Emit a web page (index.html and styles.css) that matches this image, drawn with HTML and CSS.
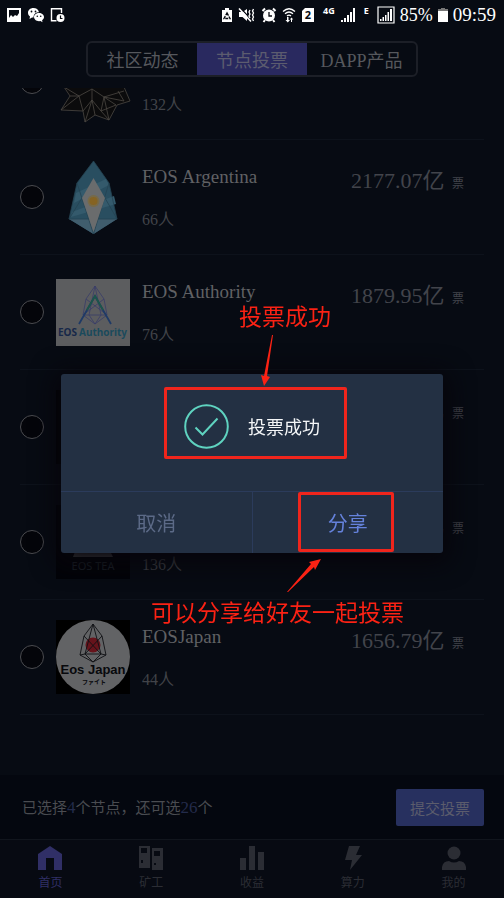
FILE: index.html
```html
<!DOCTYPE html>
<html lang="zh-CN">
<head>
    <meta charset="UTF-8">
    <meta name="viewport" content="width=device-width, initial-scale=1.0">
    <title>节点投票</title>
    <link rel="stylesheet" href="styles.css">
</head>
<body>
    <header class="status-bar">
        <div class="status-left">
            <svg width="16" height="16" viewBox="0 0 16 16"><path fill="#fff" fill-rule="evenodd" d="M1 1h14v14H1zM3 3v8l2-3 2 2 2-2 2 1 2-3V3z"/></svg>
            <svg width="18" height="16" viewBox="0 0 18 16"><path fill="#fff" d="M6.500 1C3 1 1 3.300 1 5.800c0 1.600.8 2.900 2 3.700L2.500 12 5 10.500h1.500C6.500 7 9 5.200 12 5.200 11.500 2.600 9.200 1 6.500 1z"/><path fill="#fff" d="M12 6c-2.800 0-5 1.800-5 4.100s2.200 4.100 5 4.100l1.500-.2 2 1.200-.4-1.900c1.200-.8 1.900-1.900 1.900-3.200C17 7.800 14.800 6 12 6z"/><g fill="#080b12"><circle cx="4.500" cy="4.500" r=".9"/><circle cx="8.500" cy="4.500" r=".9"/><circle cx="10.300" cy="9.300" r=".8"/><circle cx="13.700" cy="9.300" r=".8"/></g></svg>
            <svg width="16" height="16" viewBox="0 0 16 16"><path fill="none" stroke="#fff" stroke-width="1.400" d="M11.500 6V1.700H1.500v12h5"/><circle cx="10.500" cy="11" r="4" fill="#fff"/><path fill="none" stroke="#080b12" stroke-width="1.200" d="M10.500 8.500v3h2"/></svg>
        </div>
        <div class="status-right">
            <svg width="12" height="16" viewBox="0 0 12 16"><path fill="#fff" d="M4 1h4v2h3v12H1V3h3z"/><path fill="none" stroke="#080b12" stroke-width="1.400" stroke-dasharray="3 1" d="M6 6l3 5.500H3z"/></svg>
            <svg width="18" height="16" viewBox="0 0 18 16"><path fill="#fff" d="M1 5h3.500L9 2v12l-4.500-4H1z"/><path stroke="#080b12" stroke-width="1.200" d="M2.500 1l11 12"/><path stroke="#fff" stroke-width="1.600" d="M1 1.500l12 13"/><path fill="none" stroke="#fff" stroke-width="1.300" d="M12 3l-1 2 1 2-1 2 1 2M15.500 2l-1 2 1 2-1 2 1 2-1 2 1 2"/></svg>
            <svg width="16" height="16" viewBox="0 0 16 16"><circle cx="8" cy="8.500" r="6" fill="#fff"/><path fill="none" stroke="#fff" stroke-width="2" d="M1.500 4L4 1.500M14.500 4L12 1.500M4 13l-1.500 2M12 13l1.500 2"/><path fill="none" stroke="#080b12" stroke-width="1.300" d="M8 5v4h3"/></svg>
            <svg class="icon-wifi" width="14" height="16" viewBox="0 0 14 16"><path fill="none" stroke="#fff" stroke-width="1.300" d="M1 4.500q6-5.500 12 0M3 6.800q4-3.600 8 0M5 9q2-1.800 4 0"/><path fill="#fff" d="M5 10h1.500v3H8l-2.200 2.500L3.500 13H5zM9 15V12.500H7.800L9.500 10.500l1.700 2H10V15z"/></svg>
            <svg width="14" height="16" viewBox="0 0 14 16"><path fill="#fff" d="M4 1h9v14H1V4z"/><text x="7" y="12" text-anchor="middle" class="sim-number">2</text></svg>
            <span class="net">4G</span>
            <svg class="icon-signal" width="16" height="16" viewBox="0 0 16 16"><path fill="#fff" d="M1 13h2v2H1zM4 11h2v4H4zM7 8h2v7H7zM10 5h2v10h-2zM13 1h2v14h-2z"/></svg>
            <span class="net net-edge">E</span>
            <svg width="18" height="18" viewBox="0 0 18 18"><path fill="none" stroke="#fff" stroke-width="1.200" d="M1 1h16v16H1z"/><path fill="#fff" d="M3 13h1.500v2H3zM5.500 11H7v4H5.500zM8 9h1.500v6H8zM10.500 6H12v9h-1.500zM13 3h2v12h-2z"/></svg>
            <span class="battery-level">85%</span>
            <svg width="10" height="16" viewBox="0 0 10 16"><path fill="#777" d="M3 1h4v1h3v3H0V2h3z"/><path fill="#fff" d="M0 4h10v11H0z"/></svg>
            <time class="clock">09:59</time>
        </div>
    </header>

    <nav class="top-nav">
        <div class="segments">
            <button type="button" class="segment">社区动态</button>
            <button type="button" class="segment active">节点投票</button>
            <button type="button" class="segment">DAPP产品</button>
        </div>
    </nav>

    <main class="node-list">
        <ul class="nodes">
            <li class="node">
                <input type="checkbox" class="pick" aria-label="132人">
                <svg class="logo" viewBox="0 0 74 74">
                    <path fill="#0b0b0c" stroke="#4b4843" stroke-width=".8" d="M8 30v12l6 9-9 14 22 1 2 11 10-7 14 5 8-15 13-4-6-14V30z"/>
                    <path fill="none" stroke="#4b4843" stroke-width=".8" d="M5 65l18-14 4 15M8 42l15 9 13-7 12 8-3 14 15-6-12-8 20-6M14 51l9 0M36 44v11l-9 11M36 55l-7 22M36 55l3 15M36 55l9 11M45 66l8 9M48 52l5 23M62 46l6 10-20-4"/>
                </svg>
                <div class="info">
                    <span class="name"></span>
                    <span class="people">132人</span>
                </div>
            </li>
            <li class="node">
                <input type="checkbox" class="pick" id="argentina">
                <svg class="logo" viewBox="0 0 74 74">
                    <path fill="#294e60" d="M37.500 1L53 23l8 36-23.500 15L13 59l8-36z"/>
                    <path fill="#345a6c" d="M20 33l30-14 3 6-35 18zM16 52l42-16 2 8-45 13z"/>
                    <path fill="#405d6d" d="M13 59l24.500 15L61 59z"/>
                    <path fill="none" stroke="#244352" stroke-width=".8" d="M37.500 1L21 23l-8 36h48l-8-36zM21 23l16.500 51L53 23M26 38L13 59M49 38l12 21"/>
                    <path fill="#6a6c6d" d="M37.500 18L49 38 37.500 72 26 38z"/>
                    <circle cx="37.500" cy="41" r="6" fill="#776a48"/>
                    <circle cx="37.500" cy="41" r="4" fill="#856323"/>
                </svg>
                <label class="info" for="argentina">
                    <span class="name">EOS Argentina</span>
                    <span class="people">66人</span>
                </label>
                <p class="votes">2177.07亿 <small>票</small></p>
            </li>
            <li class="node">
                <input type="checkbox" class="pick" id="authority">
                <svg class="logo" viewBox="0 0 74 74">
                    <path fill="#5c5d5f" d="M0 4h74v67H0z"/>
                    <path fill="none" stroke="#383c68" stroke-width=".8" d="M39 11l-9 13-3 16 12 9 12-9-3-16zM39 11l-6 29 6 9 6-9zM27 40h24M30 24l21 16M48 24L27 40"/>
                    <path fill="none" stroke="#1f3a66" stroke-width="1.800" d="M23 49l16-28 16 28"/>
                    <path fill="none" stroke="#1c554a" stroke-width="1.800" d="M31 35l8-14 8 14"/>
                    <text x="2" y="61" class="authority-text"><tspan fill="#172849">EOS</tspan><tspan dx="2" fill="#1a4a5c">Authority</tspan></text>
                </svg>
                <label class="info" for="authority">
                    <span class="name">EOS Authority</span>
                    <span class="people">76人</span>
                </label>
                <p class="votes">1879.95亿 <small>票</small></p>
            </li>
            <li class="node">
                <input type="checkbox" class="pick" aria-label="票">
                <svg class="logo" viewBox="0 0 74 74"><path fill="#020306" d="M0 0h74v74H0z"/></svg>
                <div class="info"></div>
                <p class="votes">亿 <small>票</small></p>
            </li>
            <li class="node">
                <input type="checkbox" class="pick" id="tea">
                <svg class="logo" viewBox="0 0 74 74">
                    <path fill="#020308" d="M0 0h74v74H0z"/>
                    <path fill="#4e4f51" d="M20 44h33l4 8H17z"/>
                    <text x="37" y="65" text-anchor="middle" class="tea-text">EOS TEA</text>
                </svg>
                <label class="info" for="tea">
                    <span class="name"></span>
                    <span class="people">136人</span>
                </label>
                <p class="votes">亿 <small>票</small></p>
            </li>
            <li class="node">
                <input type="checkbox" class="pick" id="japan">
                <svg class="logo" viewBox="0 0 74 74">
                    <path fill="#000" d="M0 0h74v74H0z"/>
                    <circle cx="37" cy="37" r="37" fill="#626365"/>
                    <circle cx="37" cy="25" r="7.500" fill="#66131b"/>
                    <path fill="none" stroke="#101114" stroke-width=".9" d="M37 4l-9 12-4 19 13 7 13-7-4-19zM37 4l-8 30 8 8 8-8zM24 35l5-1h16l5 1M28 16l17 18M46 16L29 34"/>
                    <text x="37" y="54" text-anchor="middle" class="japan-text">Eos Japan</text>
                    <text x="38" y="64" text-anchor="middle" class="japan-sub">ファイト</text>
                </svg>
                <label class="info" for="japan">
                    <span class="name">EOSJapan</span>
                    <span class="people">44人</span>
                </label>
                <p class="votes">1656.79亿 <small>票</small></p>
            </li>
        </ul>
    </main>

    <section class="submit-bar">
        <p class="summary">已选择<b>4</b>个节点，还可选<b>26</b>个</p>
        <button type="button" class="submit">提交投票</button>
    </section>

    <nav class="tab-bar">
        <a href="#" class="tab active">
            <svg width="26" height="26" viewBox="0 0 26 26"><path fill="currentColor" d="M13 1l12 8v16h-8V13H9v12H1V9z"/></svg>
            首页
        </a>
        <a href="#" class="tab">
            <svg width="26" height="26" viewBox="0 0 26 26"><path fill="currentColor" fill-rule="evenodd" d="M1 1h11v22H1zM3 3v5h6V3zM3 15v3h2v-3zM14 3h11v22H14zM16 6v5h6V6zM16 18v2h2v-2z"/></svg>
            矿工
        </a>
        <a href="#" class="tab">
            <svg width="26" height="26" viewBox="0 0 26 26"><path fill="currentColor" d="M1 13h6v12H1zM10 1h6v24h-6zM19 7h6v18h-6z"/></svg>
            收益
        </a>
        <a href="#" class="tab">
            <svg width="26" height="26" viewBox="0 0 26 26"><path fill="currentColor" d="M9 1h11l-4 9h6L10 25l2-10H5z"/></svg>
            算力
        </a>
        <a href="#" class="tab">
            <svg width="26" height="26" viewBox="0 0 26 26"><circle cx="13" cy="8" r="6.500" fill="currentColor"/><path fill="currentColor" d="M1 25v-3q1-6 7-6 5 3 10 0 6 0 7 6v3z"/></svg>
            我的
        </a>
    </nav>

    <div class="modal">
        <div class="dialog" role="dialog" aria-labelledby="message">
            <div class="dialog-body">
                <div class="message">
                    <svg width="45" height="45" viewBox="0 0 45 45"><circle cx="22.500" cy="22.500" r="21.300" fill="none" stroke="#5fd3c0" stroke-width="2"/><path fill="none" stroke="#5fd3c0" stroke-width="2" d="M11.500 23.500l7 7 15-16"/></svg>
                    <span id="message">投票成功</span>
                    <i class="mark mark-message"></i>
                </div>
            </div>
            <div class="actions">
                <button type="button" class="action">取消</button>
                <button type="button" class="action share">分享<i class="mark mark-share"></i></button>
            </div>

            <!-- hints -->
            <p class="hint hint-success">投票成功</p>
            <svg class="arrow arrow-down" width="16" height="52" viewBox="0 0 16 52"><path fill="#fb2214" d="M14 1h1L9 42l3 1-6 9-3-11 3 1z"/></svg>
            <p class="hint hint-share">可以分享给好友一起投票</p>
            <svg class="arrow arrow-up" width="36" height="36" viewBox="0 0 36 36"><path fill="#fb2214" d="M1 34L25 6l-2-2 12-3-6 11-1-3L2 34z"/></svg>
        </div>
    </div>
</body>
</html>
```
FILE: styles.css
```css
* {
    box-sizing: border-box;
}

body {
    margin: 0;
    height: 100vh;
    display: flex;
    flex-direction: column;
    background-color: #070b13;
    color: #55575c;
    font-family: "Liberation Serif", "Noto Sans CJK SC", serif;
    overflow: hidden;
}

svg {
    display: block;
    flex: none;
}

p, ul {
    margin: 0;
    padding: 0;
}

button {
    margin: 0;
    padding: 0;
    border: none;
    background: none;
    font-family: inherit;
    cursor: pointer;
}

/* status bar */
.status-bar {
    flex: none;
    height: 30px;
    padding: 0 8px 0 6px;
    display: flex;
    justify-content: space-between;
    align-items: center;
    color: #fff;
}

.status-left,
.status-right {
    display: flex;
    align-items: center;
    gap: 5px;
}

.sim-number {
    font: bold 11px "Noto Sans", sans-serif;
    fill: #080b12;
}

.net {
    margin: 0 0 8px 3px;
    font: bold 9px/10px "Noto Sans", sans-serif;
}

.net-edge {
    margin-right: 3px;
}

.battery-level {
    font-size: 18px;
}

.clock {
    font-size: 19px;
}

/* segments */
.top-nav {
    flex: none;
    padding: 11px 0;
    display: flex;
    justify-content: center;
}

.segments {
    width: 66%;
    height: 36px;
    display: flex;
    border: 2px solid #1c1f27;
    border-radius: 6px;
    overflow: hidden;
}

.segment {
    flex: 1;
    color: #56585d;
    font-size: 18px;
}

.segment.active {
    background-color: #29295f;
    color: #5c5c6f;
}

/* node list */
.node-list {
    flex: 1;
    min-height: 0;
    padding: 0 20px;
    overflow: hidden;
}

.nodes {
    margin-top: -63px;
    list-style: none;
}

.node {
    height: 115px;
    padding-right: 20px;
    display: flex;
    align-items: center;
    gap: 12px;
    border-bottom: 1px solid #0d121b;
}

.pick {
    appearance: none;
    flex: none;
    width: 24px;
    height: 24px;
    margin: 0;
    border: 1px solid #4b4c50;
    border-radius: 50%;
    background-color: #04050a;
}

.logo {
    width: 74px;
    height: 74px;
    overflow: visible;
}

.info {
    flex: 1;
    align-self: flex-start;
    padding-top: 26px;
    display: flex;
    flex-direction: column;
    gap: 22px;
}

.name {
    height: 22px;
    font-size: 19px;
    line-height: 22px;
    color: #606164;
}

.people {
    font-size: 16px;
    line-height: 20px;
    color: #414349;
}

.votes {
    align-self: flex-start;
    padding-top: 28px;
    font-size: 22px;
    line-height: 26px;
    color: #42444b;
}

.votes small {
    margin-left: 2px;
    font-size: 12px;
}

.authority-text {
    font: bold 10px "Noto Sans", sans-serif;
}

.tea-text {
    font: 11px "Noto Sans", sans-serif;
    fill: #1c2229;
}

.japan-text {
    font: bold 13px "Liberation Sans", sans-serif;
    fill: #08090c;
}

.japan-sub {
    font: bold 6px "Noto Sans CJK JP", sans-serif;
    fill: #08090c;
}

/* submit bar */
.submit-bar {
    flex: none;
    height: 64px;
    padding: 0 20px 0 22px;
    display: flex;
    justify-content: space-between;
    align-items: center;
    background-color: #04070f;
}

.summary {
    font-size: 15px;
    color: #4a4c51;
}

.summary b {
    font-size: 17px;
    font-weight: normal;
    color: #232b4b;
}

.submit {
    width: 88px;
    height: 37px;
    border-radius: 2px;
    background-color: #27305f;
    color: #5b5c6c;
    font-size: 15px;
}

/* tab bar */
.tab-bar {
    flex: none;
    height: 59px;
    padding-top: 5px;
    display: flex;
    border-top: 1px solid #11151d;
    background-color: #070a12;
}

.tab {
    flex: 1;
    display: flex;
    flex-direction: column;
    align-items: center;
    gap: 3px;
    color: #2b2d34;
    font-size: 12px;
    line-height: 18px;
    text-decoration: none;
}

.tab.active {
    color: #302f66;
}

/* dialog */
.modal {
    position: fixed;
    inset: 28px 0 0;
    padding: 0 61px;
    display: flex;
    align-items: center;
}

.dialog {
    position: relative;
    flex: 1;
    border-radius: 3px;
    background-color: #233043;
    box-shadow: 0 4px 24px 6px #07050b;
}

.dialog-body {
    padding: 30px 0 42px;
    display: flex;
    justify-content: center;
}

.message {
    position: relative;
    display: flex;
    align-items: center;
    gap: 19px;
    color: #f4f6f8;
    font-size: 18px;
}

.actions {
    display: flex;
    border-top: 1px solid #2b3b5b;
}

.action {
    position: relative;
    flex: 1;
    height: 61px;
    color: #5c6a87;
    font-size: 20px;
}

.share {
    border-left: 1px solid #2b3b5b;
    color: #6582dc;
}

.mark {
    position: absolute;
    border: 3px solid #f0251c;
    border-radius: 2px;
}

.mark-message {
    inset: -17px -27px -10px -20px;
}

.mark-share {
    inset: 0 49px 1px 45px;
}

.hint {
    position: absolute;
    color: #fb2214;
    font-family: "Noto Sans CJK SC", sans-serif;
    font-size: 23px;
    line-height: 24px;
    white-space: nowrap;
}

.hint-success {
    left: 178px;
    top: -71px;
}

.hint-share {
    left: 90px;
    top: 225px;
}

.arrow {
    position: absolute;
}

.arrow-down {
    left: 197px;
    top: -40px;
}

.arrow-up {
    left: 225px;
    top: 184px;
}
```
